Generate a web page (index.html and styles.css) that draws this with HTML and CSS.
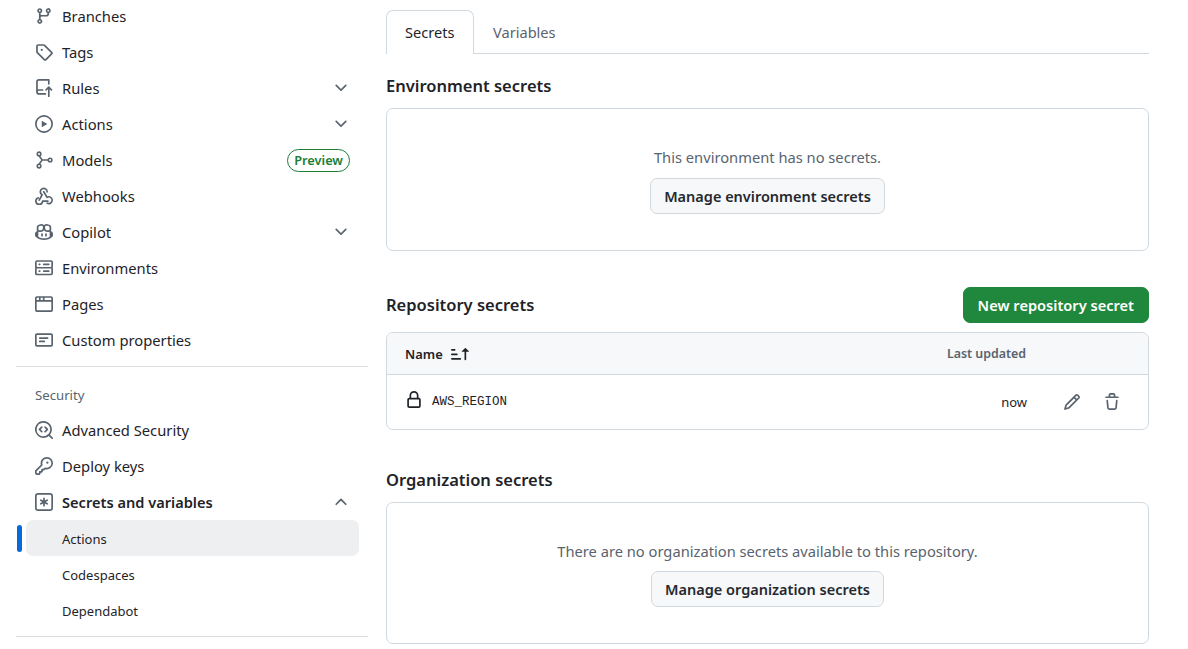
FILE: index.html
```html
<!DOCTYPE html>
<html>
<head>
    <title>Actions secrets and variables</title>
    <link rel="stylesheet" href="styles.css">
</head>
<body>
    <svg class="defs" aria-hidden="true">
        <symbol id="chevron-down" viewBox="0 0 16 16"><path d="M12.78 5.22a.749.749 0 0 1 0 1.06l-4.25 4.25a.749.749 0 0 1-1.06 0L3.22 6.28a.749.749 0 1 1 1.06-1.06L8 8.939l3.72-3.719a.749.749 0 0 1 1.06 0Z"/></symbol>
    </svg>
    <div class="page">
        <nav class="sidebar">
            <ul class="nav-group">
                <li class="nav-item">
                    <svg class="icon" viewBox="0 0 16 16"><path d="M9.5 3.25a2.25 2.25 0 1 1 3 2.122V6A2.5 2.5 0 0 1 10 8.5H6a1 1 0 0 0-1 1v1.128a2.251 2.251 0 1 1-1.5 0V5.372a2.25 2.25 0 1 1 1.5 0v1.836A2.493 2.493 0 0 1 6 7h4a1 1 0 0 0 1-1v-.628A2.25 2.25 0 0 1 9.5 3.25Zm-6 0a.75.75 0 1 0 1.5 0 .75.75 0 0 0-1.5 0Zm8.25-.75a.75.75 0 1 0 0 1.5.75.75 0 0 0 0-1.5ZM4.25 12a.75.75 0 1 0 0 1.5.75.75 0 0 0 0-1.5Z"/></svg>
                    <span class="nav-label">Branches</span>
                </li>
                <li class="nav-item">
                    <svg class="icon" viewBox="0 0 16 16"><path d="M1 7.775V2.75C1 1.784 1.784 1 2.75 1h5.025c.464 0 .91.184 1.238.513l6.25 6.25a1.75 1.75 0 0 1 0 2.474l-5.026 5.026a1.75 1.75 0 0 1-2.474 0l-6.25-6.25A1.752 1.752 0 0 1 1 7.775Zm1.5 0c0 .066.026.13.073.177l6.25 6.25a.25.25 0 0 0 .354 0l5.025-5.025a.25.25 0 0 0 0-.354l-6.25-6.25a.25.25 0 0 0-.177-.073H2.75a.25.25 0 0 0-.25.25ZM6 5a1 1 0 1 1 0 2 1 1 0 0 1 0-2Z"/></svg>
                    <span class="nav-label">Tags</span>
                </li>
                <li class="nav-item">
                    <svg class="icon" viewBox="0 0 16 16"><path d="M1 2.5A2.5 2.5 0 0 1 3.5 0h8.75a.75.75 0 0 1 .75.75v3.5a.75.75 0 0 1-1.5 0V1.5h-8a1 1 0 0 0-1 1v6.708A2.493 2.493 0 0 1 3.5 9h3.25a.75.75 0 0 1 0 1.5H3.5a1 1 0 0 0 0 2h5.75a.75.75 0 0 1 0 1.5H3.5A2.5 2.5 0 0 1 1 11.5Zm13.23 7.79-1.224-1.224v6.184a.75.75 0 0 1-1.5 0V9.066L10.28 10.29a.75.75 0 0 1-1.06-1.06l2.505-2.504a.75.75 0 0 1 1.06 0L15.29 9.23a.75.75 0 0 1-1.06 1.06Z"/></svg>
                    <span class="nav-label">Rules</span>
                    <svg class="icon chevron" viewBox="0 0 16 16"><use href="#chevron-down"/></svg>
                </li>
                <li class="nav-item">
                    <svg class="icon" viewBox="0 0 16 16"><path d="M8 0a8 8 0 1 1 0 16A8 8 0 0 1 8 0ZM1.5 8a6.5 6.5 0 1 0 13 0 6.5 6.5 0 0 0-13 0Zm4.879-2.773 4.264 2.559a.25.25 0 0 1 0 .428l-4.264 2.559A.25.25 0 0 1 6 10.559V5.442a.25.25 0 0 1 .379-.215Z"/></svg>
                    <span class="nav-label">Actions</span>
                    <svg class="icon chevron" viewBox="0 0 16 16"><use href="#chevron-down"/></svg>
                </li>
                <li class="nav-item">
                    <svg class="icon icon-stroke" viewBox="0 0 16 16"><circle cx="3.6" cy="2.6" r="1.6"/><circle cx="3.6" cy="13.4" r="1.6"/><circle cx="13.4" cy="8" r="1.6"/><path d="M3.6 4.2 6.4 8 3.6 11.8M6.4 8h5.4"/></svg>
                    <span class="nav-label">Models</span>
                    <span class="badge">Preview</span>
                </li>
                <li class="nav-item">
                    <svg class="icon" viewBox="0 0 16 16"><path d="M5.5 4.25a2.25 2.25 0 0 1 4.5 0 .75.75 0 0 0 1.5 0 3.75 3.75 0 1 0-6.14 2.889l-2.272 4.258a.75.75 0 0 0 1.324.706L7 7.25a.75.75 0 0 0-.309-1.023A2.25 2.25 0 0 1 5.5 4.25Z"/><path d="M7.364 3.607a.75.75 0 0 1 1.03.257l2.608 4.349a3.75 3.75 0 1 1-.628 6.785.75.75 0 0 1 .752-1.299 2.25 2.25 0 1 0-.033-3.88.75.75 0 0 1-1.03-.256L7.107 4.636a.75.75 0 0 1 .257-1.03Z"/><path d="M2.69 8.9a.75.75 0 0 1 .37 1.45A2.25 2.25 0 1 0 6 12.5a.75.75 0 0 1 .75-.75h4.75a.75.75 0 0 1 0 1.5H7.4A3.75 3.75 0 1 1 2.69 8.9Z"/></svg>
                    <span class="nav-label">Webhooks</span>
                </li>
                <li class="nav-item">
                    <svg class="icon" viewBox="0 0 16 16"><path d="M7.998 15.035c-4.562 0-7.873-2.914-7.998-3.749V9.338c.085-.628.677-1.686 1.588-2.065.013-.07.024-.143.036-.218.029-.183.06-.384.126-.612-.201-.508-.254-1.084-.254-1.656 0-.87.128-1.769.693-2.484.579-.733 1.494-1.124 2.724-1.261 1.206-.134 2.262.034 2.944.765.05.053.096.108.139.165.044-.057.094-.112.143-.165.682-.731 1.738-.899 2.944-.765 1.23.137 2.145.528 2.724 1.261.566.715.693 1.614.693 2.484 0 .572-.053 1.148-.254 1.656.066.228.098.429.126.612.012.076.024.148.037.218.924.385 1.522 1.471 1.591 2.095v1.872c0 .766-3.351 3.795-8.002 3.795Zm0-1.485c2.28 0 4.584-1.11 5.002-1.433V7.862l-.023-.116c-.49.21-1.075.291-1.727.291-1.146 0-2.059-.327-2.71-.991A3.222 3.222 0 0 1 8 6.303a3.24 3.24 0 0 1-.544.743c-.65.664-1.563.991-2.71.991-.652 0-1.236-.081-1.727-.291l-.023.116v4.255c.419.323 2.722 1.433 5.002 1.433ZM6.762 2.83c-.193-.206-.637-.413-1.682-.297-1.019.113-1.479.404-1.713.7-.247.312-.369.789-.369 1.554 0 .793.129 1.171.308 1.371.162.181.519.379 1.442.379.853 0 1.339-.235 1.638-.54.315-.322.527-.827.617-1.553.117-.935-.037-1.395-.241-1.614Zm4.155-.297c-1.044-.116-1.488.091-1.681.297-.204.219-.359.679-.242 1.614.091.726.303 1.231.618 1.553.299.305.784.54 1.638.54.922 0 1.28-.198 1.442-.379.179-.2.308-.578.308-1.371 0-.765-.123-1.242-.37-1.554-.233-.296-.693-.587-1.713-.7Z"/><path d="M6.25 9.037a.75.75 0 0 1 .75.75v1.501a.75.75 0 0 1-1.5 0V9.787a.75.75 0 0 1 .75-.75Zm4.25.75v1.501a.75.75 0 0 1-1.5 0V9.787a.75.75 0 0 1 1.5 0Z"/></svg>
                    <span class="nav-label">Copilot</span>
                    <svg class="icon chevron" viewBox="0 0 16 16"><use href="#chevron-down"/></svg>
                </li>
                <li class="nav-item">
                    <svg class="icon" viewBox="0 0 16 16"><path d="M1.75 1h12.5c.966 0 1.75.784 1.75 1.75v4c0 .372-.116.717-.314 1 .198.283.314.628.314 1v4a1.75 1.75 0 0 1-1.75 1.75H1.75A1.75 1.75 0 0 1 0 13.25v-4c0-.372.116-.717.314-1a1.739 1.739 0 0 1-.314-1v-4C0 1.784.784 1 1.75 1ZM1.5 2.75v4c0 .138.112.25.25.25h12.5a.25.25 0 0 0 .25-.25v-4a.25.25 0 0 0-.25-.25H1.75a.25.25 0 0 0-.25.25Zm.25 5.75a.25.25 0 0 0-.25.25v4c0 .138.112.25.25.25h12.5a.25.25 0 0 0 .25-.25v-4a.25.25 0 0 0-.25-.25ZM7 4.75A.75.75 0 0 1 7.75 4h4.5a.75.75 0 0 1 0 1.5h-4.5A.75.75 0 0 1 7 4.75ZM7.75 10h4.5a.75.75 0 0 1 0 1.5h-4.5a.75.75 0 0 1 0-1.5ZM3 4.75A.75.75 0 0 1 3.75 4h.5a.75.75 0 0 1 0 1.5h-.5A.75.75 0 0 1 3 4.75ZM3.75 10h.5a.75.75 0 0 1 0 1.5h-.5a.75.75 0 0 1 0-1.5Z"/></svg>
                    <span class="nav-label">Environments</span>
                </li>
                <li class="nav-item">
                    <svg class="icon" viewBox="0 0 16 16"><path d="M0 2.75C0 1.784.784 1 1.75 1h12.5c.966 0 1.75.784 1.75 1.75v10.5A1.75 1.75 0 0 1 14.25 15H1.75A1.75 1.75 0 0 1 0 13.25ZM14.5 6h-13v7.25c0 .138.112.25.25.25h12.5a.25.25 0 0 0 .25-.25Zm-6-3.5v2H14.5V2.75a.25.25 0 0 0-.25-.25ZM5 2.5v2h2v-2Zm-3.25 0a.25.25 0 0 0-.25.25V4.5h2v-2Z"/></svg>
                    <span class="nav-label">Pages</span>
                </li>
                <li class="nav-item">
                    <svg class="icon" viewBox="0 0 16 16"><path d="M0 3.75C0 2.784.784 2 1.75 2h12.5c.966 0 1.75.784 1.75 1.75v8.5A1.75 1.75 0 0 1 14.25 14H1.75A1.75 1.75 0 0 1 0 12.25Zm1.75-.25a.25.25 0 0 0-.25.25v8.5c0 .138.112.25.25.25h12.5a.25.25 0 0 0 .25-.25v-8.5a.25.25 0 0 0-.25-.25ZM3.5 6.25a.75.75 0 0 1 .75-.75h7a.75.75 0 0 1 0 1.5h-7a.75.75 0 0 1-.75-.75Zm.75 2.25h4a.75.75 0 0 1 0 1.5h-4a.75.75 0 0 1 0-1.5Z"/></svg>
                    <span class="nav-label">Custom properties</span>
                </li>
            </ul>
            <ul class="nav-group nav-group-bordered">
                <li class="nav-heading">Security</li>
                <li class="nav-item">
                    <svg class="icon" viewBox="0 0 16 16"><path d="M8.47 4.97a.75.75 0 0 0 0 1.06L9.94 7.5 8.47 8.97a.75.75 0 1 0 1.06 1.06l2-2a.75.75 0 0 0 0-1.06l-2-2a.75.75 0 0 0-1.06 0ZM6.53 6.03a.75.75 0 0 0-1.06-1.06l-2 2a.75.75 0 0 0 0 1.06l2 2a.75.75 0 1 0 1.06-1.06L5.06 7.5l1.47-1.47Z"/><path d="M12.246 13.307a7.501 7.501 0 1 1 1.06-1.06l2.474 2.473a.749.749 0 0 1-.326 1.275.749.749 0 0 1-.734-.215ZM1.5 7.5a6.002 6.002 0 0 0 3.608 5.504 6.002 6.002 0 0 0 6.486-1.117.748.748 0 0 1 .292-.293A6 6 0 1 0 1.5 7.5Z"/></svg>
                    <span class="nav-label">Advanced Security</span>
                </li>
                <li class="nav-item">
                    <svg class="icon" viewBox="0 0 16 16"><path d="M10.5 0a5.499 5.499 0 1 1-1.288 10.848l-.932.932a.749.749 0 0 1-.53.22H7v.75a.749.749 0 0 1-.22.53l-.5.5a.749.749 0 0 1-.53.22H5v.75a.749.749 0 0 1-.22.53l-.5.5a.749.749 0 0 1-.53.22h-2A1.75 1.75 0 0 1 0 14.25v-2c0-.199.079-.389.22-.53l4.932-4.932A5.5 5.5 0 0 1 10.5 0Zm-4 5.5c-.001.431.069.86.205 1.269a.75.75 0 0 1-.181.768L1.5 12.56v1.69c0 .138.112.25.25.25h1.69l.06-.06v-1.19a.75.75 0 0 1 .75-.75h1.19l.06-.06v-1.19a.75.75 0 0 1 .75-.75h1.19l1.023-1.025a.75.75 0 0 1 .768-.18A4 4 0 1 0 6.5 5.5ZM11 6a1 1 0 1 1 0-2 1 1 0 0 1 0 2Z"/></svg>
                    <span class="nav-label">Deploy keys</span>
                </li>
                <li class="nav-item nav-item-open">
                    <svg class="icon" viewBox="0 0 16 16"><path d="M0 2.75A2.75 2.75 0 0 1 2.75 0h10.5A2.75 2.75 0 0 1 16 2.75v10.5A2.75 2.75 0 0 1 13.25 16H2.75A2.75 2.75 0 0 1 0 13.25ZM2.75 1.5c-.69 0-1.25.56-1.25 1.25v10.5c0 .69.56 1.25 1.25 1.25h10.5c.69 0 1.25-.56 1.25-1.25V2.75c0-.69-.56-1.25-1.25-1.25Z"/><path d="M8 4a.75.75 0 0 1 .75.75V6.7l1.69-.975a.75.75 0 0 1 .75 1.3L9.5 8l1.69.976a.75.75 0 0 1-.75 1.298L8.75 9.3v1.951a.75.75 0 0 1-1.5 0V9.299l-1.69.976a.75.75 0 0 1-.75-1.3L6.5 8l-1.69-.975a.75.75 0 0 1 .75-1.3l1.69.976V4.75A.75.75 0 0 1 8 4Z"/></svg>
                    <span class="nav-label">Secrets and variables</span>
                    <svg class="icon chevron" viewBox="0 0 16 16"><path d="M3.22 10.53a.749.749 0 0 1 0-1.06l4.25-4.25a.749.749 0 0 1 1.06 0l4.25 4.25a.749.749 0 1 1-1.06 1.06L8 6.811 4.28 10.53a.749.749 0 0 1-1.06 0Z"/></svg>
                </li>
                <li class="nav-item nav-sub nav-sub-active">Actions</li>
                <li class="nav-item nav-sub">Codespaces</li>
                <li class="nav-item nav-sub">Dependabot</li>
            </ul>
            <div class="nav-rule"></div>
        </nav>

        <main class="content">
            <div class="tabs">
                <span class="tab tab-active">Secrets</span>
                <span class="tab">Variables</span>
            </div>

            <div class="section-head section-head-env">
                <h2>Environment secrets</h2>
            </div>
            <div class="box blank">
                <p>This environment has no secrets.</p>
                <button class="btn">Manage environment secrets</button>
            </div>

            <div class="section-head section-head-repo">
                <h2>Repository secrets</h2>
                <button class="btn btn-primary">New repository secret</button>
            </div>
            <div class="box secrets-table">
                <div class="table-head">
                    <span class="col-name">Name
                        <svg class="icon sort-icon" viewBox="0 0 16 16"><path d="m12.927 2.573 3 3A.25.25 0 0 1 15.75 6H13.5v6.75a.75.75 0 0 1-1.5 0V6H9.75a.25.25 0 0 1-.177-.427l3-3a.25.25 0 0 1 .354 0ZM0 12.25a.75.75 0 0 1 .75-.75h7.5a.75.75 0 0 1 0 1.5H.75a.75.75 0 0 1-.75-.75Zm0-4a.75.75 0 0 1 .75-.75h4.5a.75.75 0 0 1 0 1.5H.75A.75.75 0 0 1 0 8.25Zm0-4a.75.75 0 0 1 .75-.75h2.5a.75.75 0 0 1 0 1.5H.75A.75.75 0 0 1 0 4.25Z"/></svg>
                    </span>
                    <span class="col-updated">Last updated</span>
                </div>
                <div class="table-row">
                    <svg class="icon lock-icon" viewBox="0 0 16 16"><path d="M4 4a4 4 0 0 1 8 0v2h.25c.966 0 1.75.784 1.75 1.75v5.5A1.75 1.75 0 0 1 12.25 15h-8.5A1.75 1.75 0 0 1 2 13.25v-5.5C2 6.784 2.784 6 3.75 6H4Zm8.25 3.5h-8.5a.25.25 0 0 0-.25.25v5.5c0 .138.112.25.25.25h8.5a.25.25 0 0 0 .25-.25v-5.5a.25.25 0 0 0-.25-.25ZM10.5 6V4a2.5 2.5 0 1 0-5 0v2Z"/></svg>
                    <code class="secret-name">AWS_REGION</code>
                    <span class="col-updated col-now">now</span>
                    <div class="row-actions">
                        <svg class="icon" viewBox="0 0 16 16"><path d="M11.013 1.427a1.75 1.75 0 0 1 2.474 0l1.086 1.086a1.75 1.75 0 0 1 0 2.474l-8.61 8.61c-.21.21-.47.364-.756.445l-3.251.93a.75.75 0 0 1-.927-.928l.929-3.25c.081-.286.235-.547.445-.758l8.61-8.61Zm.176 4.823L9.75 4.81l-6.286 6.287a.253.253 0 0 0-.064.108l-.558 1.953 1.953-.558a.253.253 0 0 0 .108-.064Zm1.238-3.763a.25.25 0 0 0-.354 0L10.811 3.75l1.439 1.44 1.263-1.263a.25.25 0 0 0 0-.354Z"/></svg>
                        <svg class="icon" viewBox="0 0 16 16"><path d="M11 1.75V3h2.25a.75.75 0 0 1 0 1.5H2.75a.75.75 0 0 1 0-1.5H5V1.75C5 .784 5.784 0 6.75 0h2.5C10.216 0 11 .784 11 1.75ZM4.496 6.675l.66 6.6a.25.25 0 0 0 .249.225h5.19a.25.25 0 0 0 .249-.225l.66-6.6a.75.75 0 0 1 1.492.149l-.66 6.6A1.748 1.748 0 0 1 10.595 15h-5.19a1.75 1.75 0 0 1-1.741-1.575l-.66-6.6a.75.75 0 1 1 1.492-.15ZM6.5 1.75V3h3V1.75a.25.25 0 0 0-.25-.25h-2.5a.25.25 0 0 0-.25.25Z"/></svg>
                    </div>
                </div>
            </div>

            <div class="section-head section-head-org">
                <h2>Organization secrets</h2>
            </div>
            <div class="box blank blank-org">
                <p>There are no organization secrets available to this repository.</p>
                <button class="btn">Manage organization secrets</button>
            </div>
        </main>
    </div>
</body>
</html>
```

FILE: styles.css
```css
* {
    box-sizing: border-box;
}

html,
body {
    height: 100%;
    overflow: hidden;
}

body {
    margin: 0;
    font-family: "Noto Sans", Arial, sans-serif;
    font-size: 14.6px;
    color: #1f2328;
    background-color: #fff;
}

.defs {
    display: none;
}

.page {
    display: flex;
    margin-top: -2px;
    padding-left: 16px;
}

.icon {
    width: 18px;
    height: 18px;
    flex-shrink: 0;
    fill: #59636e;
}

.icon-stroke {
    fill: none;
    stroke: #59636e;
    stroke-width: 1.4;
}

/* sidebar */
.sidebar {
    width: 352px;
    flex-shrink: 0;
}

.nav-group {
    list-style: none;
    margin: 0;
    padding: 0 9px 0 10px;
}

.nav-group-bordered {
    position: relative;
    margin-top: 8px;
    border-top: 1px solid #d9dde1;
    padding-top: 10px;
}

.nav-item {
    display: flex;
    align-items: center;
    gap: 9px;
    height: 36px;
    padding: 0 9px;
    border-radius: 7px;
    font-size: 14.75px;
    line-height: 1;
}

.nav-label {
    flex: 1;
}

.nav-heading {
    height: 35px;
    padding: 1px 0 0 9px;
    font-size: 13.2px;
    line-height: 35px;
    color: #59636e;
}

.nav-item-open {
    font-size: 14.6px;
    font-weight: 600;
}

.badge {
    height: 23px;
    padding: 0 6px;
    border: 1px solid #1a7f37;
    border-radius: 12px;
    font-size: 12.8px;
    font-weight: 600;
    line-height: 20px;
    color: #1a7f37;
}

.nav-sub {
    padding: 3px 0 0 36px;
    font-size: 13px;
}

.nav-sub-active {
    position: relative;
    background-color: #eeeff1;
}

.nav-sub-active::before {
    content: "";
    position: absolute;
    left: -9px;
    top: 5px;
    width: 5px;
    height: 27px;
    border-radius: 3px;
    background-color: #0969da;
}

.nav-rule {
    height: 1px;
    margin-top: 8px;
    background-color: #d9dde1;
}

/* main column */
.content {
    width: 763px;
    margin-left: 18px;
    flex-shrink: 0;
}

.tabs {
    display: flex;
    height: 44px;
    margin-top: 12px;
    border-bottom: 1px solid #d1d9e0;
}

.tab {
    height: 44px;
    padding: 0 19px;
    line-height: 44px;
    color: #59636e;
}

.tab-active {
    width: 88px;
    border: 1px solid #d1d9e0;
    border-bottom: none;
    border-radius: 7px 7px 0 0;
    padding: 0 18px;
    line-height: 42px;
    color: #1f2328;
    background-color: #fff;
}

.section-head {
    display: flex;
    align-items: center;
    justify-content: space-between;
}

.section-head h2 {
    margin: 0;
    font-size: 16.5px;
    font-weight: 600;
}

.section-head-env {
    height: 54px;
    padding-top: 8px;
}

.section-head-repo {
    height: 45px;
    margin-top: 36px;
    padding-bottom: 9px;
}

.section-head-repo h2 {
    margin-bottom: 2px;
}

.section-head-org {
    height: 72px;
    padding-top: 26px;
}

.box {
    border: 1px solid #d1d9e0;
    border-radius: 7px;
}

.blank {
    display: flex;
    flex-direction: column;
    align-items: center;
    height: 143px;
    padding-top: 37px;
    font-size: 14.7px;
    color: #59636e;
}

.blank p {
    margin: 0 0 10px;
    line-height: 22px;
}

.blank .btn {
    padding: 0 13px;
    font-size: 14.5px;
}

.blank-org {
    height: 142px;
}

.blank-org p {
    margin-bottom: 9px;
}

.btn {
    height: 36px;
    padding: 0 14px;
    border: 1px solid #d1d9e0;
    border-radius: 7px;
    font-family: inherit;
    font-size: 14.6px;
    font-weight: 600;
    color: #25292e;
    background-color: #f6f8fa;
    flex-shrink: 0;
}

.btn-primary {
    border-color: #1f883d;
    color: #fff;
    background-color: #1f883d;
}

/* secrets table */
.secrets-table {
    height: 98px;
}

.table-head {
    display: flex;
    align-items: center;
    height: 42px;
    padding: 0 122px 0 18px;
    border-bottom: 1px solid #d1d9e0;
    border-radius: 7px 7px 0 0;
    font-size: 12.9px;
    font-weight: 600;
    background-color: #f6f8fa;
}

.col-name {
    display: flex;
    align-items: center;
    gap: 8px;
    flex: 1;
}

.sort-icon {
    fill: #1f2328;
}

.table-head .col-updated {
    font-size: 12.4px;
    color: #59636e;
}

.table-row {
    display: flex;
    align-items: center;
    height: 54px;
    padding: 0 27px 0 18px;
}

.lock-icon {
    fill: #1f2328;
    margin: -4px 9px 0 0;
}

.secret-name {
    flex: 1;
    font-family: "Liberation Mono", monospace;
    font-size: 12.5px;
}

.col-now {
    font-size: 13px;
}

.row-actions {
    display: flex;
    gap: 22px;
    margin-left: 36px;
}
```
